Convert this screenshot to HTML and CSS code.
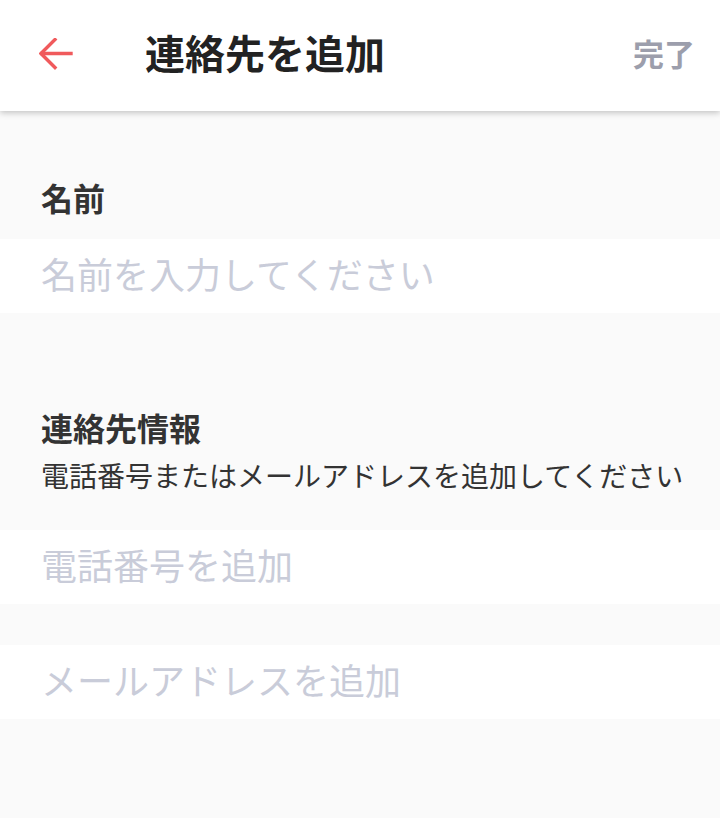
FILE: index.html
```html
<!DOCTYPE html>
<html lang="ja">
<head>
<meta charset="utf-8">
<link rel="stylesheet" href="styles.css">
</head>
<body>
<header class="topbar">
  <button class="back" aria-label="戻る">
    <svg width="34" height="34" viewBox="0 0 34 34" fill="none" stroke="#f05a5c" stroke-width="3.4" stroke-linecap="square" stroke-linejoin="miter">
      <path d="M32 15.5H3"/>
      <path d="M16 1.5L2 15.5L16 29.5"/>
    </svg>
  </button>
  <h1 class="title">連絡先を追加</h1>
  <span class="done">完了</span>
</header>
<main class="content">
  <section class="group group-name">
    <h2 class="label">名前</h2>
  </section>
  <div class="field">名前を入力してください</div>
  <section class="group group-contact">
    <h2 class="label">連絡先情報</h2>
    <p class="hint">電話番号またはメールアドレスを追加してください</p>
  </section>
  <div class="field">電話番号を追加</div>
  <div class="spacer"></div>
  <div class="field">メールアドレスを追加</div>
</main>
</body>
</html>
```
FILE: styles.css
```css
html, body {
  margin: 0;
  padding: 0;
  background: #fafafa;
  font-family: "Noto Sans CJK JP", "Noto Sans", sans-serif;
}
.topbar {
  position: relative;
  z-index: 1;
  height: 111px;
  box-sizing: border-box;
  background: #fff;
  display: flex;
  align-items: center;
  padding: 0 25px 8px 39px;
  box-shadow: 0 2px 6px rgba(0,0,0,0.22);
}
.back {
  border: 0;
  background: none;
  padding: 0;
  width: 34px;
  height: 34px;
  margin-top: 7px;
  display: flex;
}
.title {
  margin: 0 0 0 72px;
  font-size: 40px;
  line-height: 40px;
  font-weight: 700;
  color: #222;
  flex: 1;
}
.done {
  font-size: 31px;
  line-height: 32px;
  font-weight: 700;
  color: #9c9eac;
  margin-top: 2px;
}
.content {
  display: flex;
  flex-direction: column;
}
.group {
  padding: 0 20px 0 41px;
}
.group-name {
  padding-top: 70px;
  padding-bottom: 26px;
}
.group-contact {
  padding-top: 98px;
  padding-bottom: 41px;
}
.label {
  margin: 0;
  font-size: 32px;
  line-height: 32px;
  font-weight: 700;
  color: #333;
}
.hint {
  margin: 18px 0 0;
  font-size: 28px;
  line-height: 28px;
  color: #333;
  white-space: nowrap;
  letter-spacing: 0;
}
.field {
  height: 74px;
  box-sizing: border-box;
  padding-bottom: 6px;
  background: #fff;
  display: flex;
  align-items: center;
  padding-left: 41px;
  font-size: 36px;
  color: #c9ccd9;
}
.spacer {
  height: 41px;
}
```
